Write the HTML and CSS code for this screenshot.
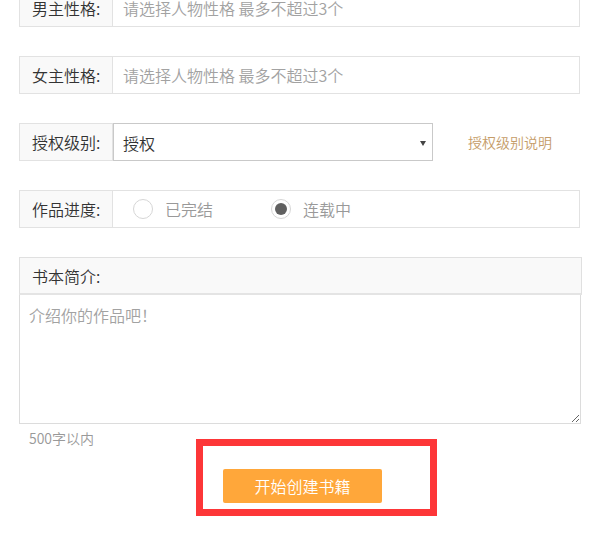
FILE: index.html
```html
<!DOCTYPE html>
<html lang="zh-CN">
<head>
<meta charset="utf-8">
<title>创建书籍</title>
<link rel="stylesheet" href="styles.css">
</head>
<body>
<form class="form">
  <div class="row">
    <div class="label">男主性格:</div>
    <div class="value placeholder">请选择人物性格 最多不超过3个</div>
  </div>
  <div class="row">
    <div class="label">女主性格:</div>
    <div class="value placeholder">请选择人物性格 最多不超过3个</div>
  </div>
  <div class="row row-plain">
    <div class="label label-boxed">授权级别:</div>
    <div class="select">
      <span class="select-text">授权</span>
      <span class="select-arrow"></span>
    </div>
    <a class="help-link">授权级别说明</a>
  </div>
  <div class="row">
    <div class="label">作品进度:</div>
    <div class="value radios">
      <label class="radio"><span class="radio-dot"></span><span class="radio-text">已完结</span></label>
      <label class="radio radio-checked"><span class="radio-dot"></span><span class="radio-text">连载中</span></label>
    </div>
  </div>
  <div class="section">
    <div class="section-head">书本简介:</div>
    <textarea class="intro" placeholder="介绍你的作品吧！"></textarea>
  </div>
  <div class="hint">500字以内</div>
  <div class="actions">
    <button type="button" class="submit">开始创建书籍</button>
    <div class="mark"></div>
  </div>
</form>
</body>
</html>
```

FILE: styles.css
```css
* { box-sizing: border-box; }
html, body { margin: 0; padding: 0; background: #fff; }
body {
  font-family: "Noto Sans CJK SC", "Noto Sans", sans-serif;
  font-weight: 350;
  color: #333;
  font-size: 16px;
}
.form {
  margin-top: -11px;
  padding-left: 19px;
  display: flex;
  flex-direction: column;
  gap: 29px;
  width: 600px;
}
.row {
  display: flex;
  align-items: stretch;
  width: 561px;
  height: 38px;
  border: 1px solid #e2e2e2;
}
.row-plain {
  border: none;
  align-items: center;
  width: 561px;
}
.label {
  width: 93px;
  flex: none;
  background: #f9f9f9;
  border-right: 1px solid #e2e2e2;
  padding-left: 12px;
  display: flex;
  align-items: center;
  font-size: 16px;
  color: #333;
  line-height: 1;
}
.label-boxed {
  height: 38px;
  width: 94px;
  border: 1px solid #e2e2e2;
  padding-left: 12px;
}
.value {
  flex: 1;
  display: flex;
  align-items: center;
  padding-left: 10px;
}
.placeholder { color: #a2a2a2; }
.select {
  position: relative;
  width: 320px;
  height: 38px;
  border: 1px solid #c9c9c9;
  background: #fff;
  display: flex;
  align-items: center;
  padding-left: 9px;
  color: #333;
}
.select-text { padding-top: 2px; }
.select-arrow {
  position: absolute;
  right: 6px;
  top: 17px;
  width: 0;
  height: 0;
  border-left: 3px solid transparent;
  border-right: 3px solid transparent;
  border-top: 5px solid #444;
}
.help-link {
  margin-left: 35px;
  font-size: 14px;
  color: #c59c68;
  cursor: pointer;
}
.radios {
  padding-left: 20px;
  gap: 58px;
  color: #999;
}
.radio {
  display: flex;
  align-items: center;
  gap: 12px;
}
.radio-dot {
  width: 20px;
  height: 20px;
  border-radius: 50%;
  border: 1px solid #d6d6d6;
  background: #fff;
  display: flex;
  align-items: center;
  justify-content: center;
}
.radio-checked .radio-dot::after {
  content: "";
  width: 12px;
  height: 12px;
  border-radius: 50%;
  background: #606060;
}
.radio-text { color: #999; }
.section {
  width: 563px;
  display: flex;
  flex-direction: column;
}
.section-head {
  height: 38px;
  background: #f9f9f9;
  border: 1px solid #e0e0e0;
  border-bottom: 2px solid #e4e4e4;
  padding-left: 12px;
  display: flex;
  align-items: center;
  color: #333;
}
.intro {
  display: block;
  width: 562px;
  height: 129px;
  border: 1px solid #dcdcdc;
  border-top: none;
  padding: 8px 9px;
  font-family: "Noto Sans CJK SC", "Noto Sans", sans-serif;
  font-weight: 350;
  font-size: 16px;
  line-height: 24px;
  color: #333;
  resize: vertical;
  outline: none;
  margin: 0;
}
.intro::placeholder { color: #a2a2a2; }
.hint {
  margin-top: -25px;
  padding-left: 10px;
  font-size: 14px;
  line-height: 20px;
  color: #999;
}
.actions {
  position: relative;
  margin-top: -8px;
  padding-left: 204px;
  height: 70px;
}
.submit {
  width: 159px;
  height: 34px;
  border: none;
  border-radius: 2px;
  background: #ffa73a;
  color: #fff;
  font-family: "Noto Sans CJK SC", "Noto Sans", sans-serif;
  font-weight: 350;
  font-size: 16px;
  padding: 0;
  cursor: pointer;
}
.mark {
  position: absolute;
  left: 177px;
  top: -30px;
  width: 241px;
  height: 77px;
  border: 7px solid #fd3638;
  pointer-events: none;
}
```
